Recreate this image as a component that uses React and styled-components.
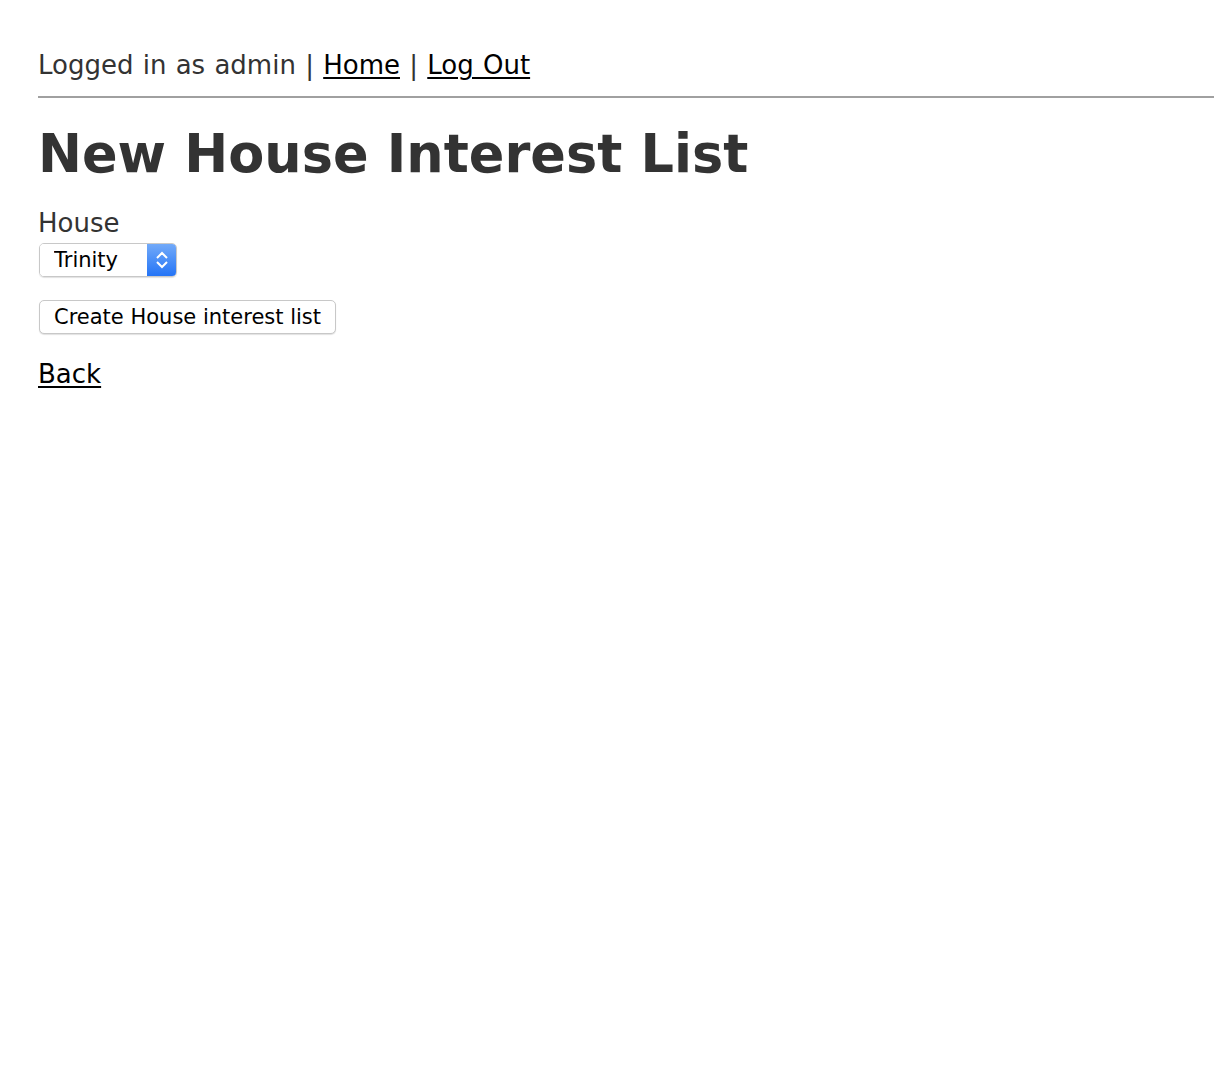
import React from 'react';
import styled, { createGlobalStyle } from 'styled-components';

const GlobalStyle = createGlobalStyle`
    body {
        margin: 0;
        background: #fff;
        color: #333;
        font-family: Verdana, "DejaVu Sans", sans-serif;
    }
`;

const Page = styled.div`
    padding: 48px 0 0 38px;
`;

const TopBar = styled.div`
    font-size: 26px;
    line-height: 34px;
    word-spacing: 1px;
    color: #333;
`;

const Link = styled.a`
    color: #000;
    text-decoration: underline;
    text-underline-offset: 3px;
`;

const Rule = styled.hr`
    margin: 14px 0 0;
    border: none;
    height: 2px;
    background: #a0a0a0;
`;

const Title = styled.h1`
    margin: 24px 0 21px;
    font-size: 52.5px;
    line-height: 64px;
    font-weight: bold;
    color: #333;
`;

const Form = styled.form`
    display: flex;
    flex-direction: column;
    align-items: flex-start;
`;

const Label = styled.label`
    font-size: 26px;
    line-height: 32px;
    color: #333;
`;

const SelectWrap = styled.div`
    display: flex;
    width: 138px;
    height: 34px;
    box-sizing: border-box;
    border: 1px solid #c8c8c8;
    border-radius: 5px;
    overflow: hidden;
    margin: 4px 0 0 1px;
    box-shadow: 0 1px 1px rgba(0, 0, 0, 0.12);
`;

const Select = styled.select`
    appearance: none;
    flex: 1;
    border: none;
    background: #fff;
    font-family: inherit;
    font-size: 21px;
    color: #000;
    padding: 0 0 0 14px;
    outline: none;
`;

const Arrows = styled.div`
    width: 29px;
    display: flex;
    align-items: center;
    justify-content: center;
    background: linear-gradient(#72aaf9, #2474f6);
`;

const Button = styled.button`
    margin: 23px 0 0 1px;
    height: 34px;
    padding: 0 14px;
    background: #fff;
    border: 1px solid #c8c8c8;
    border-radius: 5px;
    box-shadow: 0 1px 1px rgba(0, 0, 0, 0.12);
    font-family: inherit;
    font-size: 21px;
    color: #000;
`;

const BackLink = styled(Link)`
    display: inline-block;
    margin-top: 24px;
    font-size: 26px;
    line-height: 32px;
`;

const App = () => {
    return (
        <Page>
            <GlobalStyle />
            <TopBar>
                Logged in as admin | <Link href="#">Home</Link> | <Link href="#">Log Out</Link>
            </TopBar>
            <Rule />
            <Title>New House Interest List</Title>
            <Form onSubmit={e => e.preventDefault()}>
                <Label htmlFor="house">House</Label>
                <SelectWrap>
                    <Select id="house" defaultValue="Trinity">
                        <option>Trinity</option>
                    </Select>
                    <Arrows>
                        <svg width="14" height="24" viewBox="0 0 14 24">
                            <path d="M2 10 L7 5 L12 10 M2 14 L7 19 L12 14" fill="none" stroke="#fff" strokeWidth="2" />
                        </svg>
                    </Arrows>
                </SelectWrap>
                <Button type="submit">Create House interest list</Button>
            </Form>
            <BackLink href="#">Back</BackLink>
        </Page>
    );
};

export default App;
